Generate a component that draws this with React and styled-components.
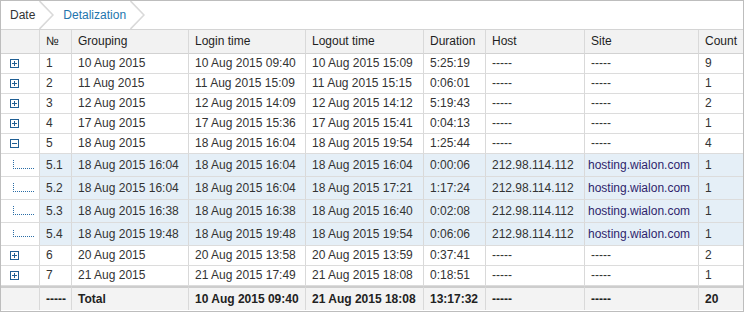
import React from "react";
import styled, { createGlobalStyle, css } from "styled-components";

const GlobalStyle = createGlobalStyle`
  html, body {
    margin: 0;
    padding: 0;
    background: #fff;
  }
  body {
    font-family: "Liberation Sans", Arial, sans-serif;
    font-size: 12px;
    color: #333;
  }
`;

const COLUMNS = [
  { key: "tree", label: "", width: 39 },
  { key: "n", label: "№", width: 32 },
  { key: "group", label: "Grouping", width: 117 },
  { key: "login", label: "Login time", width: 117 },
  { key: "logout", label: "Logout time", width: 118 },
  { key: "dur", label: "Duration", width: 62 },
  { key: "host", label: "Host", width: 99 },
  { key: "site", label: "Site", width: 114 },
  { key: "count", label: "Count", width: 44 },
];

const ROWS = [
  { n: "1", group: "10 Aug 2015", login: "10 Aug 2015 09:40", logout: "10 Aug 2015 15:09", dur: "5:25:19", host: "-----", site: "-----", count: "9" },
  { n: "2", group: "11 Aug 2015", login: "11 Aug 2015 15:09", logout: "11 Aug 2015 15:15", dur: "0:06:01", host: "-----", site: "-----", count: "1" },
  { n: "3", group: "12 Aug 2015", login: "12 Aug 2015 14:09", logout: "12 Aug 2015 14:12", dur: "5:19:43", host: "-----", site: "-----", count: "2" },
  { n: "4", group: "17 Aug 2015", login: "17 Aug 2015 15:36", logout: "17 Aug 2015 15:41", dur: "0:04:13", host: "-----", site: "-----", count: "1" },
  {
    n: "5", group: "18 Aug 2015", login: "18 Aug 2015 16:04", logout: "18 Aug 2015 19:54", dur: "1:25:44", host: "-----", site: "-----", count: "4",
    children: [
      { n: "5.1", group: "18 Aug 2015 16:04", login: "18 Aug 2015 16:04", logout: "18 Aug 2015 16:04", dur: "0:00:06", host: "212.98.114.112", site: "hosting.wialon.com", count: "1" },
      { n: "5.2", group: "18 Aug 2015 16:04", login: "18 Aug 2015 16:04", logout: "18 Aug 2015 17:21", dur: "1:17:24", host: "212.98.114.112", site: "hosting.wialon.com", count: "1" },
      { n: "5.3", group: "18 Aug 2015 16:38", login: "18 Aug 2015 16:38", logout: "18 Aug 2015 16:40", dur: "0:02:08", host: "212.98.114.112", site: "hosting.wialon.com", count: "1" },
      { n: "5.4", group: "18 Aug 2015 19:48", login: "18 Aug 2015 19:48", logout: "18 Aug 2015 19:54", dur: "0:06:06", host: "212.98.114.112", site: "hosting.wialon.com", count: "1" },
    ],
  },
  { n: "6", group: "20 Aug 2015", login: "20 Aug 2015 13:58", logout: "20 Aug 2015 13:59", dur: "0:37:41", host: "-----", site: "-----", count: "2" },
  { n: "7", group: "21 Aug 2015", login: "21 Aug 2015 17:49", logout: "21 Aug 2015 18:08", dur: "0:18:51", host: "-----", site: "-----", count: "1" },
];

const TOTAL = { n: "-----", group: "Total", login: "10 Aug 2015 09:40", logout: "21 Aug 2015 18:08", dur: "13:17:32", host: "-----", site: "-----", count: "20" };

const Frame = styled.div`
  width: 744px;
  height: 312px;
  box-sizing: border-box;
  border: 1px solid #bdbdbd;
  background: #fff;
  overflow: hidden;
`;

const TabBar = styled.div`
  display: flex;
  height: 28px;
  border-bottom: 1px solid #d4d4d4;
`;

const Tab = styled.div`
  display: flex;
  align-items: center;
  padding-left: 9px;
  color: ${(p) => (p.$active ? "#2275ad" : "#333")};
  font-size: 12px;
`;

const ChevronSvg = styled.svg`
  margin-left: 4px;
  flex: none;
`;

const Chevron = () => (
  <ChevronSvg width="15" height="28" viewBox="0 0 15 28">
    <polyline points="0.5,0 14,14 0.5,28" fill="none" stroke="#d9d9d9" strokeWidth="1.6" />
  </ChevronSvg>
);

const Table = styled.table`
  width: 742px;
  table-layout: fixed;
  border-collapse: separate;
  border-spacing: 0;
`;

const cellBase = css`
  box-sizing: border-box;
  padding: 0 0 0 6px;
  text-align: left;
  white-space: nowrap;
  overflow: hidden;
  border-right: 1px solid #d9d9d9;
  border-bottom: 1px solid #dcdcdc;
  &:last-child {
    border-right: none;
  }
`;

const Th = styled.th`
  ${cellBase};
  background: #f2f2f2;
  color: #1e1e1e;
  font-weight: normal;
  line-height: 23px;
  border-bottom-color: #d2d2d2;
`;

const Td = styled.td`
  ${cellBase};
  line-height: ${(p) => (p.$child ? "22px" : "19px")};
  background: ${(p) => (p.$child ? "#e5eff7" : "#fff")};
  color: ${(p) => (p.$link ? "#2f1f6c" : "#333")};
  padding-left: ${(p) => (p.$link ? "3px" : "6px")};
`;

const TreeTd = styled.td`
  ${cellBase};
  padding: 0;
  vertical-align: top;
  line-height: ${(p) => (p.$child ? "22px" : "19px")};
  background: #fff;
`;

const TotalTd = styled.td`
  ${cellBase};
  line-height: 22px;
  font-weight: bold;
  color: #222;
  background: #f3f3f3;
  border-top: 2px solid #cdcdcd;
  border-bottom: none;
`;

const Expander = styled.span`
  position: relative;
  display: inline-block;
  width: 9px;
  height: 9px;
  margin-left: 9px;
  vertical-align: -1px;
  box-sizing: border-box;
  border: 1px solid #1f5e93;
  &::before {
    content: "";
    position: absolute;
    left: 1px;
    top: 3px;
    width: 5px;
    height: 1px;
    background: #1f5e93;
  }
  &::after {
    content: "";
    display: ${(p) => (p.$open ? "none" : "block")};
    position: absolute;
    left: 3px;
    top: 1px;
    width: 1px;
    height: 5px;
    background: #1f5e93;
  }
`;

const TreeLine = styled.span`
  display: block;
  width: 20px;
  height: ${(p) => (p.$last ? "6px" : "8px")};
  margin: ${(p) => (p.$last ? "7px" : "6px")} 0 0 12px;
  border-left: 1px dotted #2a6da6;
  border-bottom: 1px dotted #2a6da6;
`;

const DATA_KEYS = ["n", "group", "login", "logout", "dur", "host", "site", "count"];

const DataRow = ({ row, child, last }) => (
  <tr>
    <TreeTd $child={child}>
      {child ? <TreeLine $last={last} /> : <Expander $open={!!row.children} />}
    </TreeTd>
    {DATA_KEYS.map((k) => (
      <Td key={k} $child={child} $link={child && k === "site"}>
        {row[k]}
      </Td>
    ))}
  </tr>
);

export default function App() {
  return (
    <>
      <GlobalStyle />
      <Frame>
        <TabBar>
          <Tab>
            Date
            <Chevron />
          </Tab>
          <Tab $active>
            Detalization
            <Chevron />
          </Tab>
        </TabBar>
        <Table>
          <colgroup>
            {COLUMNS.map((c) => (
              <col key={c.key} style={{ width: c.width }} />
            ))}
          </colgroup>
          <thead>
            <tr>
              {COLUMNS.map((c) => (
                <Th key={c.key}>{c.label}</Th>
              ))}
            </tr>
          </thead>
          <tbody>
            {ROWS.map((row) => (
              <React.Fragment key={row.n}>
                <DataRow row={row} />
                {row.children &&
                  row.children.map((ch, i) => (
                    <DataRow key={ch.n} row={ch} child last={i === row.children.length - 1} />
                  ))}
              </React.Fragment>
            ))}
            <tr>
              <TotalTd />
              {DATA_KEYS.map((k) => (
                <TotalTd key={k}>{TOTAL[k]}</TotalTd>
              ))}
            </tr>
          </tbody>
        </Table>
      </Frame>
    </>
  );
}
